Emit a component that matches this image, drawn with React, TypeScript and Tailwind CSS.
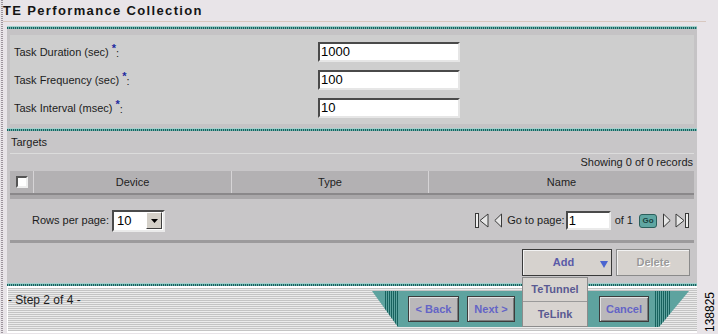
import React from 'react';

function TealBand() {
  return <div className="h-[3px] border-t border-[#a3d0cc] bg-[repeating-linear-gradient(90deg,#17625e_0_1px,#6fb0ac_1px_2px)]" />;
}

function Required() {
  return (
    <span className="inline-flex items-center ml-[3px]">
      <span className="relative -top-[4px] text-[#1c2aa0] font-bold text-[11px] leading-none">*</span>
      <span className="relative top-[1px]">:</span>
    </span>
  );
}

function Field({ label, value }: { label: string; value: string }) {
  return (
    <div className="flex items-center h-[20px]">
      <div className="w-[308px] pl-[4px] flex items-center">
        {label}
        <Required />
      </div>
      <div className="w-[142px] h-[20px] bg-white border-2 border-t-[#4a4a4a] border-l-[#4a4a4a] border-r-[#e6e6e6] border-b-[#e6e6e6] text-[13px] leading-[16px] pl-[1px] text-black">
        {value}
      </div>
    </div>
  );
}

function FirstIcon() {
  return (
    <svg width="14" height="15" viewBox="0 0 14 15">
      <rect x="0.5" y="0.5" width="3" height="14" fill="#f0f0f0" stroke="#3a3a3a" />
      <polygon points="13,1 5,7.5 13,14" fill="#e6e6e6" stroke="#3a3a3a" />
    </svg>
  );
}

function PrevIcon() {
  return (
    <svg width="8" height="15" viewBox="0 0 8 15">
      <polygon points="7.5,1 0.8,7.5 7.5,14" fill="#e6e6e6" stroke="#3a3a3a" />
    </svg>
  );
}

function NextIcon() {
  return (
    <svg width="8" height="15" viewBox="0 0 8 15">
      <polygon points="0.5,1 7.2,7.5 0.5,14" fill="#e6e6e6" stroke="#3a3a3a" />
    </svg>
  );
}

function LastIcon() {
  return (
    <svg width="14" height="15" viewBox="0 0 14 15">
      <polygon points="1,1 9,7.5 1,14" fill="#e6e6e6" stroke="#3a3a3a" />
      <rect x="10.5" y="0.5" width="3" height="14" fill="#f0f0f0" stroke="#3a3a3a" />
    </svg>
  );
}

function FooterButton({ label, className }: { label: string; className: string }) {
  return (
    <button
      className={
        'h-[26px] bg-[#bab8ba] border border-[#3c3c3c] shadow-[inset_1px_1px_0_#e4e4e4,inset_-1px_-1px_0_#7c7c7c] text-[11px] font-bold text-[#6464c6] ' +
        className
      }
    >
      {label}
    </button>
  );
}

function Trapezoid() {
  return (
    <svg className="absolute inset-0" width="317" height="36" viewBox="0 0 317 36">
      <defs>
        <clipPath id="trap">
          <polygon points="0,0 317,0 287,36 26,36" />
        </clipPath>
      </defs>
      <g clipPath="url(#trap)">
        <rect x="0" y="0" width="317" height="36" fill="#5ea39f" />
        {[13, 15, 17, 19, 21, 23, 25, 283, 285, 287, 289, 291, 293, 295, 297].map((x) => (
          <line key={x} x1={x + 0.5} y1="0" x2={x + 0.5} y2="36" stroke="#17625e" strokeWidth="1" />
        ))}
      </g>
    </svg>
  );
}

export default function App() {
  return (
    <div className="w-[718px] h-[334px] bg-[#e8e4e8] flex overflow-hidden font-['Liberation_Sans',Arial,sans-serif] text-[11px] text-[#1c1c1c]">
      <div className="w-[3px] h-full flex justify-center">
        <div className="w-[2px] h-full bg-[repeating-linear-gradient(180deg,#9c949c_0_1px,#e8e4e8_1px_2px)]" />
      </div>

      <div className="flex-1 flex flex-col">
        <div className="h-[22px] mr-[12px] border-b border-[#d8c8c0] flex items-center text-[13px] font-bold tracking-[1.35px] text-[#141414]">
          TE Performance Collection
        </div>

        <div className="flex mt-[4px]">
          <div className="ml-[4px] w-[690px] flex flex-col">
            <TealBand />

            {/* form fields */}
            <div className="bg-[#c5c3c5] pt-[6px] pb-[4px] px-[3px]">
              <div className="bg-[#cecece] pt-[7px] pb-[6px] flex flex-col gap-[8px]">
                <Field label="Task Duration (sec)" value="1000" />
                <Field label="Task Frequency (sec)" value="100" />
                <Field label="Task Interval (msec)" value="10" />
              </div>
            </div>

            <TealBand />

            {/* targets */}
            <div className="bg-[#c8c6c8] px-[3px] pb-[7px]">
              <div className="h-[22px] flex items-center pl-[1px]">Targets</div>
              <div className="border-t border-[#dcdcdc] h-[18px] flex items-center justify-end pr-[1px]">
                Showing 0 of 0 records
              </div>

              <div className="flex h-[24px] bg-[#b3b1b3] border-b-2 border-[#8a888a] text-[#222]">
                <div className="w-[23px] flex items-center justify-center">
                  <div className="w-[12px] h-[12px] bg-white border-2 border-t-[#555] border-l-[#555] border-r-[#eee] border-b-[#eee]" />
                </div>
                <div className="w-[198px] border-l border-[#d6d4d6] flex items-center justify-center">Device</div>
                <div className="w-[197px] border-l border-[#d6d4d6] flex items-center justify-center">Type</div>
                <div className="flex-1 border-l border-[#d6d4d6] flex items-center justify-center">Name</div>
              </div>
              <div className="h-[4px] bg-[#a9a7a9]" />

              <div className="mt-[10px] h-[23px] flex items-center">
                <span className="ml-[22px]">Rows per page:</span>
                <div className="ml-[3px] w-[53px] h-[22px] bg-white border-2 border-t-[#4a4a4a] border-l-[#4a4a4a] border-r-[#eaeaea] border-b-[#eaeaea] flex items-center justify-between">
                  <span className="pl-[3px] text-[13px] text-black">10</span>
                  <div className="w-[16px] h-[17px] mr-[1px] bg-[#d4d0c8] border border-t-[#fff] border-l-[#fff] border-r-[#404040] border-b-[#404040] flex items-center justify-center">
                    <svg width="7" height="4" viewBox="0 0 7 4">
                      <polygon points="0,0 7,0 3.5,4" fill="#000" />
                    </svg>
                  </div>
                </div>

                <div className="ml-auto mr-[5px] flex items-center">
                  <FirstIcon />
                  <span className="ml-[5px]"><PrevIcon /></span>
                  <span className="ml-[5px]">Go to page:</span>
                  <div className="ml-[1px] w-[45px] h-[19px] bg-white border-2 border-t-[#4a4a4a] border-l-[#4a4a4a] border-r-[#eaeaea] border-b-[#eaeaea] text-[13px] leading-[15px] pl-[1px] text-black">
                    1
                  </div>
                  <span className="ml-[4px]">of 1</span>
                  <div className="ml-[6px] w-[18px] h-[14px] rounded-[3px] bg-[#5fa6a2] border border-[#2b5f5c] flex items-center justify-center text-[8px] font-bold text-[#1a4240]">
                    Go
                  </div>
                  <span className="ml-[6px]"><NextIcon /></span>
                  <span className="ml-[4px]"><LastIcon /></span>
                </div>
              </div>

              <div className="mt-[8px] h-[3px] bg-[#9c9a9c]" />

              <div className="mt-[6px] flex justify-end pr-[4px] gap-[4px]">
                <div className="relative">
                  <button className="w-[90px] h-[27px] bg-[#d6d2ce] border border-[#3a3a3a] shadow-[inset_1px_1px_0_#f2f2f2] flex items-center text-[11px] font-bold text-[#5a5aa8]">
                    <span className="flex-1 text-center pl-[4px]">Add</span>
                    <svg className="mr-[3px] mt-[3px]" width="8" height="7" viewBox="0 0 8 7">
                      <polygon points="0,0 8,0 4,7" fill="#4a64d0" />
                    </svg>
                  </button>
                  <div className="absolute left-0 top-[28px] z-10 w-[66px] bg-[#d8d4d0] border border-[#8c8c8c] text-[11px] font-bold text-[#5a5a92]">
                    <div className="h-[24px] flex items-center justify-center border-b border-[#9a9a9a]">TeTunnel</div>
                    <div className="h-[24px] flex items-center justify-center">TeLink</div>
                  </div>
                </div>
                <button className="w-[74px] h-[27px] bg-[#d6d2ce] border border-[#8a8a8a] shadow-[inset_1px_1px_0_#f2f2f2] text-[11px] font-bold text-[#9a9a9a] [text-shadow:1px_1px_0_#fff]">
                  Delete
                </button>
              </div>
            </div>

            <TealBand />

            {/* wizard footer */}
            <div className="h-[47px] border-t-2 border-b-2 border-l border-white bg-[repeating-linear-gradient(180deg,#c4c4c4_0_1px,#ebebeb_1px_2px)] flex items-start">
              <div className="pt-[5px] text-[12px] leading-[14px]">- Step 2 of 4 -</div>
              <div className="relative ml-auto mr-[8px] mt-[3px] w-[317px] h-[36px] flex items-start pt-[5px]">
                <Trapezoid />
                <FooterButton label="< Back" className="relative ml-[36px] w-[51px]" />
                <FooterButton label="Next >" className="relative ml-[8px] w-[48px]" />
                <FooterButton label="Cancel" className="relative ml-[84px] w-[50px]" />
              </div>
            </div>
          </div>

          <div className="flex-1 flex flex-col justify-end pb-[1px]">
            <span className="ml-[7px] [writing-mode:vertical-rl] rotate-180 text-[12px] leading-[13px] text-black">
              138825
            </span>
          </div>
        </div>
      </div>
    </div>
  );
}
